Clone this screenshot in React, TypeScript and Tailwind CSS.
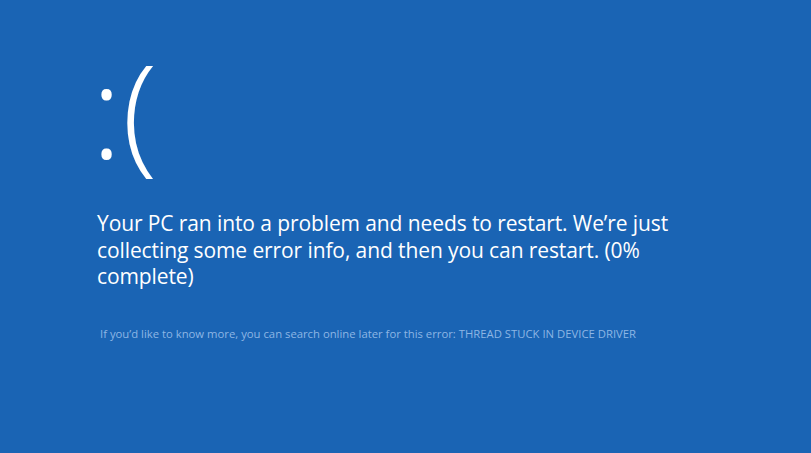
export default function App() {
  return (
    <div className="h-[453px] w-[811px] overflow-hidden bg-[#1a64b4] font-['Open_Sans',sans-serif] text-white">
      <div className="flex flex-col pl-[97px] pt-[44px]">
        <div className="-ml-[6px] h-[130px] text-[130px] font-light leading-[130px] tracking-[0px]">:(</div>

        <p className="mt-[36px] whitespace-nowrap text-[21px] leading-[26.5px] tracking-[-0.1px]">
          Your PC ran into a problem and needs to restart. We’re just
          <br />
          collecting some error info, and then you can restart. (0%
          <br />
          complete)
        </p>

        <p className="mt-[36px] pl-[3px] whitespace-nowrap text-[11.3px] text-[#8db6e4]">
          If you’d like to know more, you can search online later for this error: THREAD STUCK IN
          DEVICE DRIVER
        </p>
      </div>
    </div>
  )
}
